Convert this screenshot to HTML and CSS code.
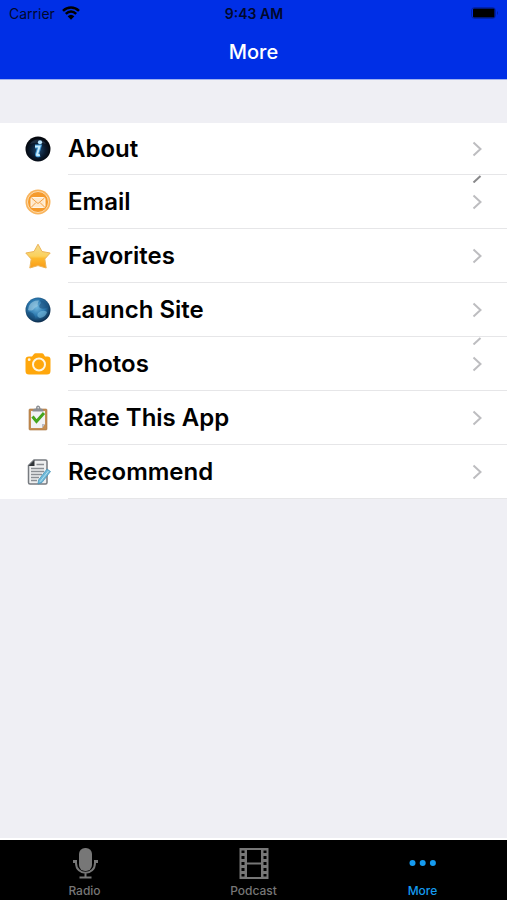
FILE: index.html
```html
<!DOCTYPE html>
<html lang="en">

<head>
    <meta charset="UTF-8">
    <meta name="viewport" content="width=device-width, initial-scale=1.0">
    <title>More</title>
    <link rel="stylesheet" href="styles.css">
</head>

<body>
    <header class="top">
        <div class="status">
            <div class="carrier">
                <span>Carrier</span>
                <svg class="wifi" viewBox="0 0 18 14">
                    <path d="M1 4.800C5.600 .3 12.400 .3 17 4.800M3.800 7.800C7 4.800 11 4.800 14.200 7.800" fill="none" stroke="currentColor" stroke-width="2.500" />
                    <path d="M5.600 10.200Q9 7.200 12.400 10.200L9 13.700Z" fill="currentColor" />
                </svg>
            </div>
            <span class="time">9:43 AM</span>
            <svg class="battery" viewBox="0 0 28 12">
                <rect x=".5" y=".5" width="24" height="11" rx="3" fill="none" stroke="#000" opacity=".25" />
                <rect x="2" y="1.500" width="21.500" height="9" rx="1" fill="#000" />
                <path d="M26 4Q28 6 26 8Z" fill="#000" opacity=".3" />
            </svg>
        </div>
        <h1>More</h1>
    </header>

    <main>
        <ul class="menu">
            <li>
                <a href="#about">
                    <svg class="icon" viewBox="0 0 26 26">
                        <defs>
                            <radialGradient id="dark" cx=".5" cy=".55" r=".5">
                                <stop offset="0" stop-color="#1f4a72" />
                                <stop offset=".6" stop-color="#0a1b30" />
                                <stop offset="1" stop-color="#04070d" />
                            </radialGradient>
                        </defs>
                        <circle cx="13" cy="13" r="12.500" fill="url(#dark)" />
                        <path d="M5 8C8 2 18 2 21 8Q13 5 5 8Z" fill="#43566b" opacity=".4" />
                        <circle cx="15" cy="6.300" r="2.100" fill="#b9e6ff" />
                        <path d="M10 10.500H14.500L12 18.500Q11.800 20 14.800 18.800" fill="none" stroke="#3a92cf" stroke-width="4" />
                        <path d="M10 10.500H14.500L12 18.500Q11.800 20 14.800 18.800" fill="none" stroke="#c6ecff" stroke-width="2" />
                    </svg>
                    <span class="label">About</span>
                    <svg class="chevron" viewBox="0 0 10 16"><path d="M1.500 1.500 8.500 8 1.500 14.500" /></svg>
                </a>
            </li>
            <li>
                <a href="#email">
                    <svg class="icon" viewBox="0 0 26 26">
                        <circle cx="13" cy="13" r="12.500" fill="#f9b45c" />
                        <circle cx="13" cy="13" r="10.500" fill="#f59a2b" stroke="#fddcae" />
                        <rect x="6" y="8.500" width="14" height="10" rx="1.500" fill="#ffe9cb" stroke="#fff6e8" />
                        <path d="M6.500 9 13 14.500 19.500 9M6.500 18 11 13.500M19.500 18 15 13.500" fill="none" stroke="#f1a044" />
                    </svg>
                    <span class="label">Email</span>
                    <svg class="chevron" viewBox="0 0 10 16"><path d="M1.500 1.500 8.500 8 1.500 14.500" /></svg>
                    <svg class="sliver dark" viewBox="0 0 10 8"><path d="M1.500 7.500 8.500 1" /></svg>
                </a>
            </li>
            <li>
                <a href="#favorites">
                    <svg class="icon" viewBox="0 0 26 26">
                        <defs>
                            <linearGradient id="gold" x1="0" y1="0" x2="0" y2="1">
                                <stop offset="0" stop-color="#f3dd92" />
                                <stop offset=".5" stop-color="#fbd15c" />
                                <stop offset=".6" stop-color="#fdb92d" />
                                <stop offset="1" stop-color="#f99b17" />
                            </linearGradient>
                        </defs>
                        <path d="M13 1.200 17 8.500 25.200 10 19.800 16 21.200 25 13 22.600 4.800 25 6.200 16 .8 10 9 8.500Z" fill="url(#gold)" stroke="#edb455" stroke-linejoin="round" />
                    </svg>
                    <span class="label">Favorites</span>
                    <svg class="chevron" viewBox="0 0 10 16"><path d="M1.500 1.500 8.500 8 1.500 14.500" /></svg>
                </a>
            </li>
            <li>
                <a href="#site">
                    <svg class="icon" viewBox="0 0 26 26">
                        <defs>
                            <radialGradient id="globe" cx=".45" cy=".4" r=".6">
                                <stop offset="0" stop-color="#6eb5dd" />
                                <stop offset=".55" stop-color="#2a76ac" />
                                <stop offset="1" stop-color="#0b2b4b" />
                            </radialGradient>
                        </defs>
                        <circle cx="13" cy="13" r="12.500" fill="url(#globe)" />
                        <path d="M4 9Q7 3 14 3.500Q12 7 13 9 10 10 8 13 5 14 3 13Z" fill="#a9d3e8" opacity=".55" />
                        <path d="M15 3Q21 4 23 10Q19 13 15 11Q13 9 16 6Z" fill="#174b78" opacity=".55" />
                        <path d="M13 16Q18 12 22 15Q21 20 15 21 11 20 13 16Z" fill="#79bddd" opacity=".6" />
                        <path d="M3 15Q9 15 10 20L9 23Q3 20 3 15Z" fill="#164a76" opacity=".5" />
                    </svg>
                    <span class="label">Launch Site</span>
                    <svg class="chevron" viewBox="0 0 10 16"><path d="M1.500 1.500 8.500 8 1.500 14.500" /></svg>
                </a>
            </li>
            <li>
                <a href="#photos">
                    <svg class="icon" viewBox="0 0 26 26">
                        <path d="M4 5.500H7L9 3Q9.500 2.300 10.500 2.300H17Q18 2.300 18.500 3L20 5.500H22.500Q25.500 5.500 25.500 8.500V20Q25.500 23.500 22 23.500H4Q.500 23.500 .500 20V8.500Q.500 5.500 4 5.500Z" fill="#ffa70c" />
                        <circle cx="14" cy="13.500" r="6" fill="#ffa70c" stroke="#fff5df" stroke-width="2" />
                        <circle cx="4.200" cy="8.700" r="1.400" fill="#fff5df" />
                    </svg>
                    <span class="label">Photos</span>
                    <svg class="chevron" viewBox="0 0 10 16"><path d="M1.500 1.500 8.500 8 1.500 14.500" /></svg>
                    <svg class="sliver" viewBox="0 0 10 8"><path d="M1.500 7.500 8.500 1" /></svg>
                </a>
            </li>
            <li>
                <a href="#rate">
                    <svg class="icon" viewBox="0 0 26 26">
                        <rect x="4" y="4" width="18" height="21" rx="1" fill="#c58e52" stroke="#a9743c" stroke-width=".6" />
                        <path d="M6 6H20V19L17 23H6Z" fill="#f1f2f5" />
                        <path d="M20 19 17 23V19Z" fill="#b9bbc4" />
                        <path d="M7.500 6.500Q7.500 3.500 11 3.500Q11 .500 13 .500T15.500 3.500Q18.500 3.500 18.500 6.500Z" fill="#8b8e93" />
                        <circle cx="13.200" cy="2.700" r=".8" fill="#eee" />
                        <path d="M7.500 11.500 11.500 16.500 19 8" fill="none" stroke="#45a51c" stroke-width="3" />
                    </svg>
                    <span class="label">Rate This App</span>
                    <svg class="chevron" viewBox="0 0 10 16"><path d="M1.500 1.500 8.500 8 1.500 14.500" /></svg>
                </a>
            </li>
            <li>
                <a href="#recommend">
                    <svg class="icon" viewBox="0 0 26 26">
                        <path d="M9 1H20.500Q22 1 22 2.500V23.500Q22 25 20.500 25H5Q3.500 25 3.500 23.500V6.500Z" fill="#eeeff0" stroke="#777b80" stroke-width="1.500" />
                        <path d="M9.500 1V7H3.500Z" fill="#303438" />
                        <path d="M11.500 5.500H19M6 9.500H19M6 12.500H19M6 15.500H17M6 18.500H14M6 21.500H12" stroke="#8b8f94" stroke-width="1.400" />
                        <path d="M22 10 25.500 12.500 17 23.500 13 25 13.500 21Z" fill="#6eb9d9" stroke="#408eb3" stroke-width=".7" />
                        <path d="M23.500 12 15 22.800" stroke="#b7e0ef" />
                    </svg>
                    <span class="label">Recommend</span>
                    <svg class="chevron" viewBox="0 0 10 16"><path d="M1.500 1.500 8.500 8 1.500 14.500" /></svg>
                </a>
            </li>
        </ul>
    </main>

    <nav class="tabs">
        <a href="#radio">
            <svg viewBox="0 0 32 32">
                <rect x="10" y="1" width="13" height="23" rx="6" fill="currentColor" />
                <path d="M7 13V16C7 29 26 29 26 16V13M16.500 25.500V30M10.500 30.500H22.500" fill="none" stroke="currentColor" stroke-width="2" />
                <path d="M4 14.500H8M25 14.500H29" stroke="currentColor" stroke-width="3" />
            </svg>
            <span>Radio</span>
        </a>
        <a href="#podcast">
            <svg viewBox="0 0 32 32">
                <path fill-rule="evenodd" d="M1.500 1H30.500V32H1.500ZM9 3V15.500H23V3ZM9 17.500V30H23V17.500ZM3.500 3.500V6H6.500V3.500ZM3.500 9V12H6.500V9ZM3.500 15V18H6.500V15ZM3.500 21V24H6.500V21ZM3.500 27V29.500H6.500V27ZM25.500 3.500V6H28.500V3.500ZM25.500 9V12H28.500V9ZM25.500 15V18H28.500V15ZM25.500 21V24H28.500V21ZM25.500 27V29.500H28.500V27Z" fill="currentColor" />
            </svg>
            <span>Podcast</span>
        </a>
        <a href="#more" class="active">
            <svg viewBox="0 0 32 32">
                <circle cx="5.500" cy="16" r="3" fill="currentColor" />
                <circle cx="15.700" cy="16" r="3" fill="currentColor" />
                <circle cx="25.900" cy="16" r="3" fill="currentColor" />
            </svg>
            <span>More</span>
        </a>
    </nav>
</body>

</html>
```

FILE: styles.css
```css
body {
    font-family: 'Inter', sans-serif;
    background-color: #efeff4;
    display: flex;
    flex-direction: column;
    min-height: 100vh;
    margin: 0;
}

a {
    color: inherit;
    text-decoration: none;
}

.top {
    background-color: #002fe6;
    border-bottom: 1px solid #9fb1ef;
}

.status {
    display: grid;
    grid-template-columns: 1fr auto 1fr;
    align-items: center;
    height: 26px;
    padding: 0 8px 0 9px;
    color: #00082c;
    font-size: 14px;
}

.carrier {
    display: flex;
    align-items: center;
    gap: 7px;
}

.wifi {
    width: 18px;
    height: 14px;
    color: #000;
}

.time {
    font-weight: 600;
}

.battery {
    width: 28px;
    height: 12px;
    justify-self: end;
}

h1 {
    margin: 0;
    padding: 14px 0 15px;
    color: #fff;
    font-size: 20px;
    font-weight: 500;
    line-height: 24px;
    text-align: center;
}

main {
    flex: 1;
    padding-top: 43px;
}

.menu {
    list-style: none;
    margin: 0;
    padding: 0;
    background-color: #fff;
}

.menu a {
    position: relative;
    display: flex;
    align-items: center;
    height: 54px;
    padding-left: 25px;
}

.menu li:first-child a {
    height: 52px;
}

.icon {
    width: 26px;
    height: 26px;
    margin-right: 17px;
}

.label {
    flex: 1;
    font-size: 24px;
    font-weight: 600;
    line-height: 28px;
    color: #000;
}

/* separator starts at the label, not at the icon */
.menu a::after {
    content: '';
    position: absolute;
    left: 68px;
    right: 0;
    bottom: 0;
    height: 1px;
    background-color: #e6e6e8;
}

.chevron {
    width: 10px;
    height: 16px;
    margin-right: 25px;
}

.chevron path,
.sliver path {
    fill: none;
    stroke: #bdbdc0;
    stroke-width: 2;
}

.sliver {
    position: absolute;
    top: 0;
    right: 25px;
    width: 10px;
    height: 8px;
}

.sliver.dark path {
    stroke: #88888a;
}

.tabs {
    display: grid;
    grid-template-columns: 1fr 1fr 1fr;
    background-color: #000;
    border-top: 2px solid #fff;
    color: #777;
}

.tabs a {
    display: flex;
    flex-direction: column;
    align-items: center;
    gap: 4px;
    padding: 7px 0 1px;
    font-size: 12px;
    font-weight: 500;
    line-height: 16px;
}

.tabs svg {
    width: 32px;
    height: 32px;
}

.tabs .active {
    color: #159bf0;
}
```
